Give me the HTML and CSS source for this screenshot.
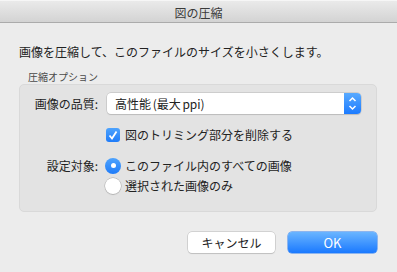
FILE: index.html
```html
<!DOCTYPE html>
<html lang="ja">
<head>
    <meta charset="UTF-8">
    <title>図の圧縮</title>
    <link rel="stylesheet" href="styles.css">
</head>
<body>
    <div class="dialog">
        <div class="titlebar">図の圧縮</div>
        <div class="content">
            <p class="intro">画像を圧縮して、このファイルのサイズを小さくします。</p>
            <div class="caption">圧縮オプション</div>
            <div class="group">
                <div class="row">
                    <span class="label">画像の品質:</span>
                    <div class="popup">
                        <span class="popup-text">高性能 (最大 ppi)</span>
                        <span class="stepper">
                            <svg width="17" height="21" viewBox="0 0 17 21">
                                <polyline points="5.5,8 8.5,5 11.5,8" fill="none" stroke="#fff" stroke-width="1.5"/>
                                <polyline points="5.5,13 8.5,16 11.5,13" fill="none" stroke="#fff" stroke-width="1.5"/>
                            </svg>
                        </span>
                    </div>
                </div>
                <div class="row row-check">
                    <span class="label"></span>
                    <label class="option">
                        <span class="checkbox">
                            <svg width="14" height="14" viewBox="0 0 14 14">
                                <polyline points="3.5,7.5 6,10.5 10.5,3.5" fill="none" stroke="#fff" stroke-width="1.8"/>
                            </svg>
                        </span>
                        図のトリミング部分を削除する
                    </label>
                </div>
                <div class="row row-radio">
                    <span class="label">設定対象:</span>
                    <label class="option">
                        <span class="radio checked"></span>
                        このファイル内のすべての画像
                    </label>
                </div>
                <div class="row row-radio2">
                    <span class="label"></span>
                    <label class="option">
                        <span class="radio"></span>
                        選択された画像のみ
                    </label>
                </div>
            </div>
            <div class="buttons">
                <button class="btn">キャンセル</button>
                <button class="btn btn-ok">OK</button>
            </div>
        </div>
    </div>
</body>
</html>
```

FILE: styles.css
```css
/* General */
body {
    margin: 0;
    font-family: "Noto Sans CJK JP", "Noto Sans", sans-serif;
    font-size: 12px;
    color: #222;
    background: #ececec;
}

.dialog {
    width: 397px;
    height: 272px;
    background: #ececec;
    overflow: hidden;
}

/* Title bar */
.titlebar {
    height: 23px;
    line-height: 23px;
    text-align: center;
    font-size: 12px;
    color: #3a3a3a;
    background: linear-gradient(to bottom, #eaeaea, #d3d3d3);
    border-top: 1px solid #f6f6f6;
    border-bottom: 1px solid #ababab;
    box-sizing: border-box;
}

.content {
    padding: 0 20px 0 19px;
}

.intro {
    margin: 21px 0 0 0;
    line-height: 16px;
}

.caption {
    margin: 10px 0 0 9px;
    font-size: 10px;
    line-height: 13px;
    color: #4a4a4a;
}

/* Options group */
.group {
    margin-top: 1px;
    height: 128px;
    background: #e3e3e3;
    border: 1px solid #d9d9d9;
    border-radius: 5px;
    box-sizing: border-box;
    padding-top: 8px;
}

.row {
    display: grid;
    grid-template-columns: 78px 1fr;
    column-gap: 9px;
    align-items: center;
}

.label {
    text-align: right;
}

.popup {
    width: 254px;
    height: 21px;
    display: flex;
    align-items: center;
    background: #fff;
    border-radius: 4px;
    box-shadow: 0 0 0 0.5px #b8b8b8, 0 1px 1px rgba(0, 0, 0, 0.15);
    box-sizing: border-box;
}

.popup-text {
    flex: 1;
    padding-left: 8px;
    word-spacing: -1px;
}

.stepper {
    width: 17px;
    height: 21px;
    background: linear-gradient(to bottom, #58aaff, #1c7bff);
    border-radius: 0 4px 4px 0;
    display: flex;
}

.row-check {
    margin-top: 13px;
}

.row-radio {
    margin-top: 14px;
}

.row-radio2 {
    margin-top: 4px;
}

.option {
    display: flex;
    align-items: center;
    gap: 5px;
    line-height: 16px;
}

.checkbox {
    width: 14px;
    height: 14px;
    border-radius: 3px;
    background: linear-gradient(to bottom, #4ea3fd, #1f7cf9);
    display: flex;
    margin-left: -1px;
}

.radio {
    width: 16px;
    height: 16px;
    border-radius: 50%;
    background: #fff;
    box-shadow: 0 0 0 0.5px #a8a8a8, 0 1px 1px rgba(0, 0, 0, 0.15);
    box-sizing: border-box;
    margin-left: -2px;
    margin-right: -1px;
    position: relative;
}

.radio.checked {
    background: linear-gradient(to bottom, #4ea3fd, #1f7cf9);
    box-shadow: none;
}

.radio.checked::after {
    content: "";
    position: absolute;
    left: 5.5px;
    top: 5.5px;
    width: 5px;
    height: 5px;
    border-radius: 50%;
    background: #fff;
}

/* Buttons */
.buttons {
    display: flex;
    justify-content: flex-end;
    gap: 13px;
    margin-top: 20px;
}

.btn {
    font-family: inherit;
    font-size: 12px;
    height: 21px;
    width: 87px;
    padding: 0;
    background: #fff;
    color: #222;
    border: none;
    border-radius: 4px;
    box-shadow: 0 0 0 0.5px #b8b8b8, 0 1px 1px rgba(0, 0, 0, 0.15);
}

.btn-ok {
    width: 89px;
    font-size: 13px;
    color: #fff;
    background: linear-gradient(to bottom, #6ab5ff, #1a79ff);
    box-shadow: 0 0 0 0.5px #2f7ff0;
}
```
